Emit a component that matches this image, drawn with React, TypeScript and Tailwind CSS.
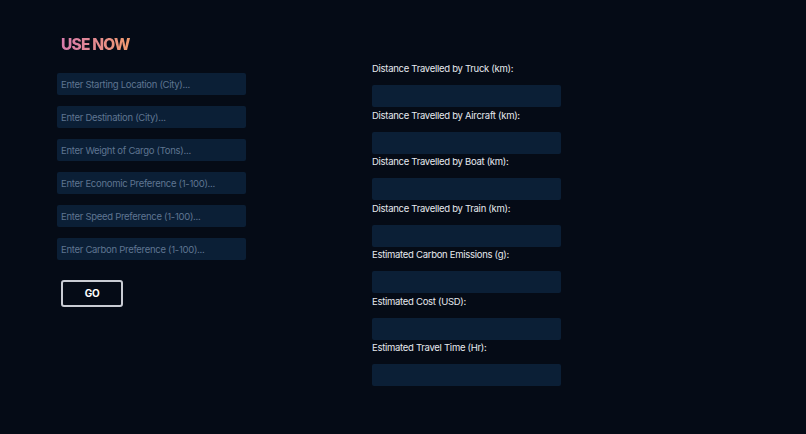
import React from 'react'

const inputs = [
  'Enter Starting Location (City)...',
  'Enter Destination (City)...',
  'Enter Weight of Cargo (Tons)...',
  'Enter Economic Preference (1-100)...',
  'Enter Speed Preference (1-100)...',
  'Enter Carbon Preference (1-100)...',
]

const outputs = [
  'Distance Travelled by Truck (km):',
  'Distance Travelled by Aircraft (km):',
  'Distance Travelled by Boat (km):',
  'Distance Travelled by Train (km):',
  'Estimated Carbon Emissions (g):',
  'Estimated Cost (USD):',
  'Estimated Travel Time (Hr):',
]

export default function App() {
  return (
    <div
      className="flex h-[434px] w-[806px] bg-[#050b16] text-white"
      style={{ fontFamily: 'Inter, "Noto Sans", sans-serif' }}
    >
      <div className="flex w-[315px] flex-col pl-[57px] pt-[36px]">
        <h1 className="ml-[4px] w-fit bg-gradient-to-r from-[#d77aac] to-[#f19a6c] bg-clip-text text-[15.5px] font-extrabold leading-[18px] tracking-[-0.05em] text-transparent">
          USE NOW
        </h1>
        <div className="mt-[19px] flex flex-col gap-[11px]">
          {inputs.map((p) => (
            <input
              key={p}
              placeholder={p}
              className="h-[22px] w-[189px] rounded-[2px] bg-[#0b1f36] px-[4px] text-[9.5px] tracking-[-0.03em] text-[#c8d2de] outline-none placeholder:text-[#5f7591]"
            />
          ))}
        </div>
        <button
          type="button"
          className="ml-[4px] mt-[20px] flex h-[27px] w-[62px] items-center justify-center rounded-[3px] border-2 border-[#c9ccd3] text-[10px] font-bold tracking-tight text-white"
        >
          GO
        </button>
      </div>
      <div className="flex flex-col pl-[57px] pt-[62px]">
        {outputs.map((label) => (
          <div key={label} className="mb-[1.5px] flex flex-col">
            <span className="h-[14px] text-[9.5px] leading-[14px] tracking-[-0.03em] text-[#e6e9ef]">{label}</span>
            <div className="mt-[9px] h-[22px] w-[189px] rounded-[2px] bg-[#0b1f36]" />
          </div>
        ))}
      </div>
    </div>
  )
}
